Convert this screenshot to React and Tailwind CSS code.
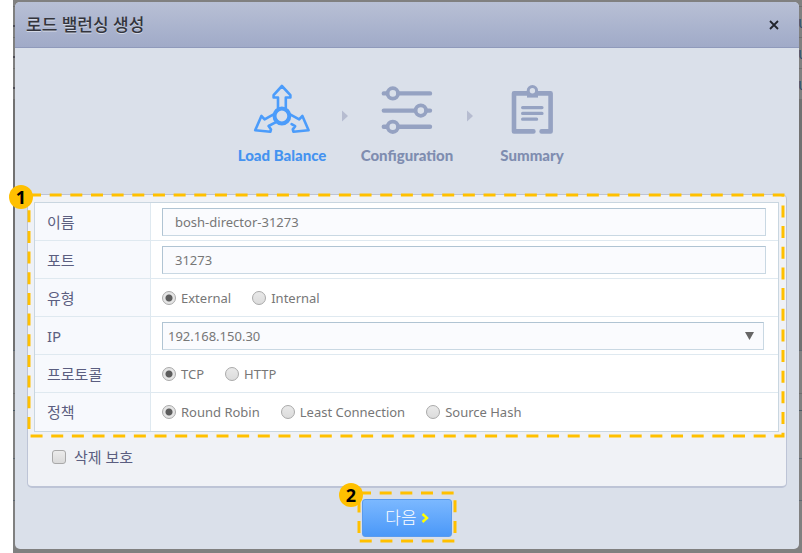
import React from "react";

const FONT = "font-['Noto_Sans','Noto_Sans_CJK_KR',sans-serif]";
const STEP_FONT = "font-['Lato',sans-serif]";

function BalanceIcon() {
  return (
    <svg width="58" height="52" viewBox="4 6 58 52" fill="none" stroke="#4b9cfb" strokeWidth="2.6" strokeLinejoin="round" strokeLinecap="round" aria-hidden="true">
      <path d="M29 30V19.5h-4.4v-2.4L32.9 8l8.5 9.1v2.4h-4.6V30" />
      <path d="M25 36.2 15.6 41.4 12.4 38 6.2 52.2 21.4 53.8 22 51.4 19.6 48 27 44.2" />
      <path d="M40.6 36.2 50.2 41.4 53.4 38 59.6 52.2 44.4 53.8 43.8 51.4 46.2 48.2 42.6 46.2" />
      <circle cx="32.9" cy="38" r="7.4" strokeWidth="4" fill="#dae0ea" />
    </svg>
  );
}

function SlidersIcon() {
  return (
    <svg width="58" height="52" viewBox="378 84 58 52" fill="none" stroke="#95a2c2" strokeWidth="4.4" strokeLinecap="round" aria-hidden="true">
      <path d="M383.8 93.4H430M383.8 110.6H430M383.8 126.8H430" />
      <g strokeWidth="3.8" fill="#dae0ea">
        <circle cx="392.8" cy="93.4" r="5.2" />
        <circle cx="420.8" cy="110.6" r="5.2" />
        <circle cx="392.8" cy="126.8" r="5.2" />
      </g>
    </svg>
  );
}

function ClipboardIcon() {
  return (
    <svg width="58" height="52" viewBox="503 84 58 52" fill="none" stroke="#95a2c2" strokeLinecap="round" strokeLinejoin="round" aria-hidden="true">
      <path strokeWidth="4.6" d="M533.4 131.4H514V93.4h36.6v38H541.6" />
      <path strokeWidth="3.2" d="M522.6 107.6H542M522.6 113.4H542M522.6 119.2H536.6" />
      <path d="M527 91h11v6.6h-11z" fill="#95a2c2" stroke="none" />
      <circle cx="532.4" cy="90.8" r="4.2" strokeWidth="3" fill="#dae0ea" />
    </svg>
  );
}

function Step({ icon, label, active }) {
  return (
    <li className="flex w-[108px] flex-col items-center gap-2">
      {icon}
      <span className={`${STEP_FONT} text-[15px]/[22px] font-black whitespace-nowrap ${active ? "text-[#4593f0]" : "text-[#7f8db0]"}`}>{label}</span>
    </li>
  );
}

function StepArrow() {
  return (
    <li aria-hidden="true" className="mt-[26px] flex w-[17px] justify-center">
      <svg width="8" height="12" viewBox="0 0 8 12"><path d="M1 0.5 7 6 1 11.5z" fill="#b6bcd0" /></svg>
    </li>
  );
}

function Row({ label, htmlFor, children, last }) {
  const line = last ? "" : "border-b border-b-[#dfe9f0]";
  return (
    <tr className="h-[38px]">
      <th scope="row" className={`w-[116px] border-r border-r-[#dfe9f0] bg-[#f7f9fd] pl-3 text-left text-[15px]/5 font-normal text-[#5b5e80] ${line}`}>
        {htmlFor ? <label htmlFor={htmlFor}>{label}</label> : label}
      </th>
      <td className={`bg-white pr-3 pl-[11px] ${line}`}>{children}</td>
    </tr>
  );
}

const FIELD =
  "block h-7 w-full appearance-none rounded-none border border-[#c9d8e3] border-t-[#b0c4d3] border-l-[#b0c4d3] bg-[#fafbfe] text-[#777] outline-none";

function Radios({ name, options }) {
  return (
    <div role="radiogroup" aria-label={name} className="flex items-center gap-[21px]">
      {options.map((option, i) => (
        <label key={option} className="flex items-center gap-[5px] text-[13px]/5 text-[#777]">
          <input
            type="radio"
            name={name}
            defaultChecked={i === 0}
            className="size-3.5 appearance-none rounded-full border border-[#a9a9a9] bg-linear-to-b from-[#e9e9e9] to-[#dcdcdc] checked:bg-[radial-gradient(circle,#5c5c5c_0,#5c5c5c_3px,#e4e4e4_4px)]"
          />
          {option}
        </label>
      ))}
    </div>
  );
}

function Callout({ number }) {
  return (
    <>
      <svg className="absolute inset-0 size-full overflow-visible" aria-hidden="true">
        <rect width="100%" height="100%" fill="none" stroke="#ffc000" strokeWidth="3" strokeDasharray="12 8.66" />
      </svg>
      <span className="absolute -top-2.5 -left-5 flex size-6 items-center justify-center rounded-full bg-[#ffc000] text-lg/6 font-bold text-black">
        {number}
      </span>
    </>
  );
}

function Backdrop() {
  return (
    <div aria-hidden="true" className="absolute inset-0 overflow-hidden text-base/[31px] text-[#35506b]">
      <div className="flex flex-col items-end pt-1.5">
        {[0, 1, 2].map((n) => (
          <div key={n} className="flex h-[31px] w-full justify-between border-t border-[#6e6e6e]">
            <span className="mt-[18px] h-0.5 w-1 bg-[#4d4d55]" />
            <span className="w-1">u</span>
          </div>
        ))}
      </div>
      <div className="h-[251px] bg-[#717171]" />
      <div className="h-[43px] border-t border-[#5f6870]" />
      <div className="h-[17px] border-t border-[#6e6e6e]" />
      <div className="h-[48px] border-t border-[#4c5a64]" />
      <div className="h-[43px] border-y border-[#5f6870]" />
    </div>
  );
}

export default function App() {
  return (
    <div className={`min-h-screen bg-white pl-[13px] ${FONT}`}>
      <div className="relative min-h-screen bg-[#808080] pt-0.5 pr-[3px] pb-[3px] pl-0.5">
        <Backdrop />
        <section role="dialog" aria-labelledby="title" className="relative rounded-[5px] bg-[#dae0ea] pb-2">
          <header className="flex h-[46px] items-center justify-between rounded-t-[5px] border-b border-[#8f9abb] bg-linear-to-b from-[#b8c0d5] to-[#a0aac8] pr-[18px] pl-[11px]">
            <h1 id="title" className="text-[17px]/6 font-medium text-[#33343c] [text-shadow:0_1px_0_#d4d9e6]">로드 밸런싱 생성</h1>
            <button type="button" aria-label="닫기" className="flex size-3.5 items-center justify-center text-[#22242c]">
              <svg width="10" height="10" viewBox="0 0 10 10" stroke="currentColor" strokeWidth="1.8"><path d="M1 1l8 8M9 1 1 9" /></svg>
            </button>
          </header>

          <ol className="flex justify-center pt-9">
            <Step icon={<BalanceIcon />} label="Load Balance" active />
            <StepArrow />
            <Step icon={<SlidersIcon />} label="Configuration" />
            <StepArrow />
            <Step icon={<ClipboardIcon />} label="Summary" />
          </ol>

          <form>
            <div className="mx-3 mt-7 rounded-[5px] border border-b-2 border-[#bdc4d6] bg-[#f0f2f6]">
              <div className="relative mr-[3px] ml-px h-[241px] pt-[7px] pr-1 pl-[5px]">
                <table className="w-full border-separate border-spacing-0 border border-[#c9d6e0]">
                  <tbody>
                    <Row label="이름" htmlFor="name">
                      <input id="name" defaultValue="bosh-director-31273" className={`${FIELD} px-3 text-[13px]/5`} />
                    </Row>
                    <Row label="포트" htmlFor="port">
                      <input id="port" defaultValue="31273" className={`${FIELD} px-3 text-[13px]/5`} />
                    </Row>
                    <Row label="유형">
                      <Radios name="유형" options={["External", "Internal"]} />
                    </Row>
                    <Row label="IP" htmlFor="ip">
                      <div className="relative mr-0.5">
                        <select id="ip" className={`${FIELD} px-[5px] text-[13px]/5`}>
                          <option>192.168.150.30</option>
                        </select>
                        <svg className="pointer-events-none absolute top-2.5 right-2.5" width="9" height="8" viewBox="0 0 9 8" aria-hidden="true"><path d="M0 0h9L4.5 8z" fill="#666" /></svg>
                      </div>
                    </Row>
                    <Row label="프로토콜">
                      <Radios name="프로토콜" options={["TCP", "HTTP"]} />
                    </Row>
                    <Row label="정책" last>
                      <Radios name="정책" options={["Round Robin", "Least Connection", "Source Hash"]} />
                    </Row>
                  </tbody>
                </table>
                <Callout number="1" />
              </div>
              <label className="flex h-[50px] items-center gap-2 pb-2 pl-6 text-[15px]/5 text-[#5b5e80]">
                <input type="checkbox" className="size-3.5 appearance-none rounded-[3px] border border-[#a9a9a9] bg-linear-to-b from-[#ececec] to-[#dadada]" />
                삭제 보호
              </label>
            </div>

            <div className="mt-[5px] flex justify-center">
              <div className="relative flex h-12 w-24 items-center justify-center pt-0.5">
                <button type="button" className="flex h-[38px] w-[90px] items-center justify-center gap-1 rounded-[3px] border border-[#5a9bee] bg-linear-to-b from-[#7bb8ff] to-[#4a98f8] text-[17px]/6 font-light text-white">
                  다음
                  <svg width="8" height="10" viewBox="0 0 8 10" fill="none" stroke="#ffff00" strokeWidth="2.4" aria-hidden="true"><path d="M1.5 1 6 5 1.5 9" /></svg>
                </button>
                <Callout number="2" />
              </div>
            </div>
          </form>
        </section>
      </div>
    </div>
  );
}
